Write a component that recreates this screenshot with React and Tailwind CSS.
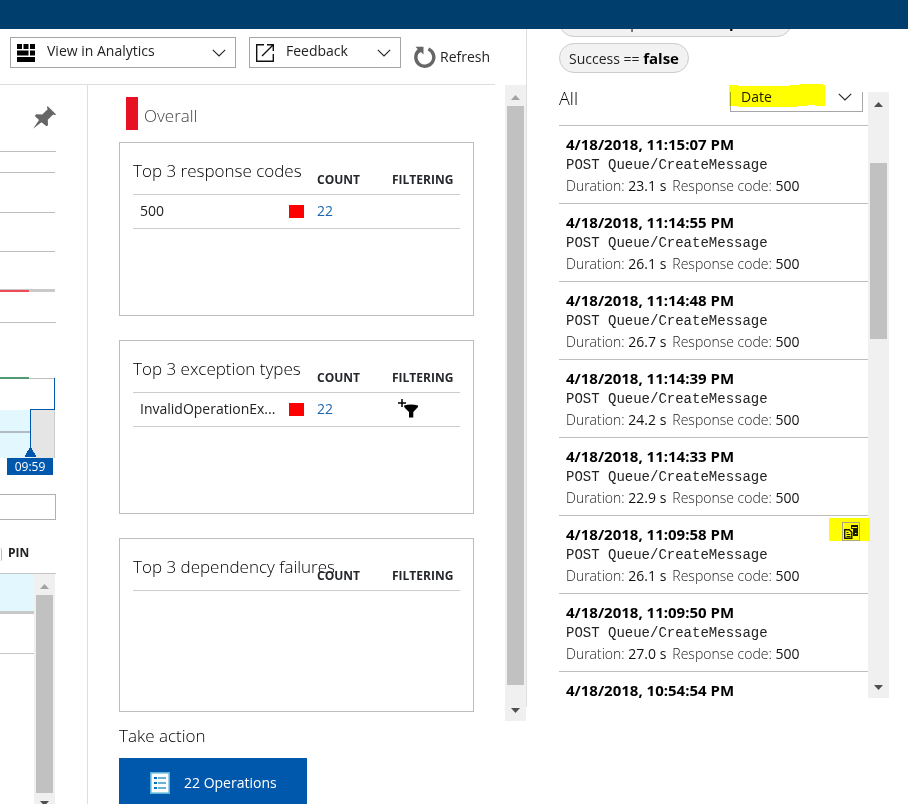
import React from "react";

const chartTicks = [11, 32, 72, 111];

const cards = [
  { title: "Top 3 response codes", rows: [{ name: "500", count: 22, filter: false }] },
  { title: "Top 3 exception types", rows: [{ name: "InvalidOperationEx...", count: 22, filter: true }] },
  { title: "Top 3 dependency failures", rows: [] },
];

const requests = [
  { time: "4/18/2018, 11:15:07 PM", duration: "23.1 s" },
  { time: "4/18/2018, 11:14:55 PM", duration: "26.1 s" },
  { time: "4/18/2018, 11:14:48 PM", duration: "26.7 s" },
  { time: "4/18/2018, 11:14:39 PM", duration: "24.2 s" },
  { time: "4/18/2018, 11:14:33 PM", duration: "22.9 s" },
  { time: "4/18/2018, 11:09:58 PM", duration: "26.1 s", profiled: true },
  { time: "4/18/2018, 11:09:50 PM", duration: "27.0 s" },
  { time: "4/18/2018, 10:54:54 PM" },
];

function Chevron() {
  return (
    <svg className="pointer-events-none h-2 w-[14px] shrink-0" viewBox="0 0 14 8" fill="none" stroke="#222" strokeWidth="1.1" aria-hidden="true">
      <path d="M.8.8 7 7 13.2.8" />
    </svg>
  );
}

function Arrow({ up, color }) {
  return (
    <svg className="h-[5px] w-[9px] shrink-0" viewBox="0 0 9 5" fill={color} aria-hidden="true">
      <path d={up ? "M0 5 4.5 0 9 5Z" : "M0 0 4.5 5 9 0Z"} />
    </svg>
  );
}

function Scrollbar({ className, before, thumb, upColor = "#a3a3a3" }) {
  return (
    <div className={`flex w-[21px] shrink-0 flex-col items-center bg-[#f0f0f0] ${className}`} aria-hidden="true">
      <div className="flex h-[21px] shrink-0 items-center justify-center pt-[3px]">
        <Arrow up color={upColor} />
      </div>
      <div className={`shrink-0 ${before}`} />
      <div className={`w-[17px] bg-[#c1c1c1] ${thumb}`} />
      <div className="mt-auto flex h-[21px] shrink-0 items-center justify-center">
        <Arrow color="#505050" />
      </div>
    </div>
  );
}

function AnalyticsIcon() {
  return (
    <svg className="h-[18px] w-[18px] shrink-0" viewBox="0 0 18 18" fill="#000" aria-hidden="true">
      <path d="M0 0h5v5H0zM6.5 0h5v5h-5zM13 0h5v5h-5zM0 6.5h11.5v5H0zM13 6.5h5v5h-5zM0 13h18v5H0z" />
    </svg>
  );
}

function FeedbackIcon() {
  return (
    <svg className="h-[18px] w-[18px] shrink-0" viewBox="0 0 18 18" fill="none" stroke="#111" strokeWidth="1.4" aria-hidden="true">
      <path d="M8 .7H.7v16.6h16.6V10M6 12 17 1M11 .7h6.3V7" />
    </svg>
  );
}

function ToolbarSelect({ label, icon, className }) {
  return (
    <div className={`flex h-[31px] min-w-0 items-center border border-[#a6a6a6] pr-[9px] pl-[6px] ${className}`}>
      {icon}
      <select aria-label={label} className="h-[25px] min-w-0 flex-1 appearance-none self-start bg-transparent pl-3 text-sm text-[#222] outline-none">
        <option>{label}</option>
      </select>
      <Chevron />
    </div>
  );
}

function Toolbar() {
  return (
    <div className="mr-[31px] flex h-14 shrink-0 items-start gap-[13px] border-b border-[#dedede] pt-2 pl-[10px]">
      <ToolbarSelect label="View in Analytics" icon={<AnalyticsIcon />} className="w-[226px]" />
      <ToolbarSelect label="Feedback" icon={<FeedbackIcon />} className="w-[152px]" />
      <button type="button" className="mt-[9px] flex items-center gap-1 text-sm text-[#222]">
        <svg className="h-[22px] w-[22px]" viewBox="0 0 22 22" aria-hidden="true">
          <path d="M14.4 3A9 9 0 1 1 5.2 4.2" fill="none" stroke="#666" strokeWidth="3.4" />
          <path d="M1.5.8h8v7.7L7 6 4 8 3 6.500 4.500 4z" fill="#666" />
        </svg>
        Refresh
      </button>
    </div>
  );
}

function TimelinePane() {
  return (
    <div className="flex w-[88px] shrink-0 flex-col border-r border-[#dedede]">
      <button type="button" aria-label="Pin to dashboard" className="mt-5 ml-[32px] h-[26px] w-[25px]">
        <svg className="h-[26px] w-[25px]" viewBox="0 0 25 26" fill="#666" aria-hidden="true">
          <path d="M15.500 1 24.200 9.400 22.500 9.900 21.200 9.600 15.800 14.700 16 20.200 14.500 21.200 9.500 17.300 1 23.800 7 15 2.800 11 4.200 9.200 10.200 9.500 15.700 4.200 15 2.800Z" />
        </svg>
      </button>
      <svg className="mt-[9px] h-[185px] w-[56px]" viewBox="0 0 56 185" shapeRendering="crispEdges" aria-hidden="true">
        {chartTicks.map((y) => (
          <path key={y} d={`M0 ${y}.5H${y === 11 ? 56 : 55}`} stroke="#bdbdbd" />
        ))}
        <rect y="149" width="55" height="3" fill="#cacaca" />
        <rect y="150" width="29" height="2" fill="#ef4a55" />
        <path d="M0 182.500H56" stroke="#bdbdbd" />
      </svg>
      <svg className="mt-[51px] h-[82px] w-[56px]" viewBox="0 0 56 82" shapeRendering="crispEdges" aria-hidden="true">
        <rect y="34" width="30" height="49" fill="#e3f8fe" />
        <rect x="31" y="34" width="23" height="49" fill="#e5e5e5" />
        <rect y="55" width="30" height="2" fill="#afbbbf" />
        <rect y="1" width="29" height="2" fill="#4f9a73" />
        <path d="M29 2.500H54" stroke="#bdbdbd" />
        <path d="M54.500 34V82" stroke="#ccc" />
        <path d="M54.500 2V33.500H30.500V73" fill="none" stroke="#0058ad" />
        <path d="M30.500 70 36.500 81H24.500Z" fill="#0058ad" />
      </svg>
      <div className="ml-[7px] h-[17px] w-[46px] bg-[#0058ad] text-center text-xs leading-[17px] text-white">09:59</div>
      <input type="search" aria-label="Search operations" className="mt-[19px] h-[26px] w-[56px] shrink-0 border border-l-0 border-[#b0b0b0] outline-none" />
      <div className="mt-6 flex h-[30px] w-[56px] shrink-0 items-start gap-[6px] border-b border-[#c4c4c4]">
        <span className="mt-1 h-[13px] w-[2px] shrink-0 rounded-r-full border-r border-[#bbb]" />
        <span className="text-xs leading-[18px] font-bold text-[#222]">PIN</span>
      </div>
      <div className="flex min-h-0 w-[55px] flex-1">
        <div className="min-w-0 flex-1">
          <div className="h-10 border-b-3 border-[#c8c8c8] bg-[#e3f8fe]" />
          <div className="h-10 border-b border-[#c8c8c8]" />
        </div>
        <Scrollbar className="h-[240px]" before="h-0" thumb="h-[199px]" />
      </div>
    </div>
  );
}

function FilterIcon() {
  return (
    <svg className="h-5 w-5" viewBox="0 0 20 20" aria-hidden="true">
      <path d="M4 0V8M0 4H8" stroke="#000" strokeWidth="1.5" />
      <path d="M6 6.500Q13 4.500 20 6.500V8L15.300 13V18.500H11V13L6.500 8.500Z" fill="#000" />
    </svg>
  );
}

function BreakdownCard({ title, rows }) {
  return (
    <section className="h-[174px] shrink-0 border border-[#bdbdbd] px-[13px]">
      <table className="w-full table-fixed border-collapse text-left text-sm">
        <colgroup>
          <col />
          <col className="w-7" />
          <col className="w-[75px]" />
          <col className="w-[68px]" />
        </colgroup>
        <thead>
          <tr className="h-[51px] border-b border-[#ccc] align-bottom">
            <th colSpan={2} className="pb-[11px] text-[17px] leading-6 font-light whitespace-nowrap text-black">{title}</th>
            <th className="pb-[5px] text-xs leading-[18px] font-bold text-[#24272c]">COUNT</th>
            <th className="pb-[5px] text-xs leading-[18px] font-bold text-[#24272c]">FILTERING</th>
          </tr>
        </thead>
        <tbody>
          {rows.map((row) => (
            <tr key={row.name} className="h-[34px] border-b border-[#ccc]">
              <td className="pl-[7px] whitespace-nowrap text-[#222]">{row.name}</td>
              <td>
                <div className="h-[13px] w-[15px] bg-[#f00]" />
              </td>
              <td>
                <a href="#count" className="text-[#1c66b0]">{row.count}</a>
              </td>
              <td>
                {row.filter && (
                  <button type="button" aria-label="Add filter" className="ml-[6px] block">
                    <FilterIcon />
                  </button>
                )}
              </td>
            </tr>
          ))}
        </tbody>
      </table>
    </section>
  );
}

function OverallPane() {
  return (
    <div className="flex min-w-0 flex-1 flex-col pr-[31px] pl-[31px]">
      <h2 className="mt-3 ml-[7px] flex h-[33px] shrink-0 items-center border-l-12 border-[#e81123] pl-[6px] pt-1 text-[17px] font-light text-[#444]">Overall</h2>
      <div className="mt-3 flex flex-col gap-6">
        {cards.map((card) => (
          <BreakdownCard key={card.title} {...card} />
        ))}
      </div>
      <h3 className="mt-3 text-[17px] leading-6 font-light text-black">Take action</h3>
      <button type="button" className="mt-[10px] flex h-[50px] w-[188px] shrink-0 items-center gap-[14px] bg-[#0058ad] pl-[31px] text-sm text-white">
        <svg className="h-[22px] w-5" viewBox="0 0 20 22" aria-hidden="true">
          <rect x=".8" y=".8" width="18.400" height="20.400" fill="#fff" stroke="#59b4d9" strokeWidth="1.600" />
          <path d="M4 6h3M4 11h3M4 16h3" stroke="#0072c6" strokeWidth="2" />
          <path d="M8 6h8M8 11h8M8 16h8" stroke="#3999c6" strokeWidth="1.400" />
        </svg>
        22 Operations
      </button>
    </div>
  );
}

function ProfilerIcon() {
  return (
    <svg className="h-[19px] w-[18px]" viewBox="0 0 18 19" aria-hidden="true">
      <rect x=".5" y=".5" width="17" height="18" fill="none" stroke="#a9a97c" />
      <path d="M9 3h7v11h-5V7H9z" fill="#1a1a00" />
      <path d="M10 5.500h5M13 11.500h1.500" stroke="#ff0" />
      <path d="M2.700 7.700h4.600l2.500 2.500v6.100H2.700z" fill="#ff0" stroke="#1a1a00" strokeWidth="1.400" />
      <path d="M4.500 10.500h2M4.500 12.500h4M4.500 14.500h4" stroke="#1a1a00" />
    </svg>
  );
}

function RequestItem({ time, duration, profiled }) {
  return (
    <li className="relative h-[78px] shrink-0 border-b border-[#bdbdbd] pt-2 pl-[7px] whitespace-nowrap">
      <div className="text-[15px] leading-5 font-bold text-black">{time}</div>
      {duration && (
        <>
          <div className="font-['Liberation_Mono',monospace] text-sm leading-[22px] text-[#222]">POST Queue/CreateMessage</div>
          <div className="flex gap-[6px] text-sm leading-5 text-[#111]">
            <span>
              <span className="font-light text-[#222]">Duration:</span> {duration}
            </span>
            <span>
              <span className="font-light text-[#222]">Response code:</span> 500
            </span>
          </div>
        </>
      )}
      {profiled && (
        <button type="button" aria-label="Profiler trace" className="absolute top-[2px] -right-[2px] flex h-[23px] w-[41px] items-end bg-[#ff0] pl-[13px]">
          <ProfilerIcon />
        </button>
      )}
    </li>
  );
}

function FilterChip({ field, value, className }) {
  return (
    <span className={`h-[30px] shrink-0 rounded-full border border-[#ccc] bg-[#f2f2f2] px-[9px] text-sm leading-7 whitespace-nowrap text-[#222] ${className}`}>
      {field} == <b className="text-[15px] text-black">{value}</b>
    </span>
  );
}

function RequestsPane() {
  return (
    <aside className="flex w-[381px] shrink-0 flex-col pr-[19px] pl-8">
      <div className="flex h-[63px] shrink-0 flex-col items-start justify-end gap-[6px] overflow-hidden pb-[19px]">
        <FilterChip field="Related operation" value="Dependent" className="w-[233px]" />
        <FilterChip field="Success" value="false" className="" />
      </div>
      <div className="flex h-[606px] min-h-0">
        <div className="relative flex min-w-0 flex-1 flex-col">
          <div className="z-10 -mr-[2px] flex min-h-0 flex-1 flex-col overflow-hidden pr-[2px]">
            <div className="flex h-[34px] shrink-0 items-start justify-between border-b border-[#bdbdbd] pr-[5px]">
              <h3 className="-mt-[6px] text-lg leading-6 font-light text-black">All</h3>
              <div className="-mt-[11px] flex h-[31px] w-[133px] items-center border border-[#a6a6a6] pr-[10px]">
                <select aria-label="Sort by" className="h-full min-w-0 flex-1 appearance-none bg-transparent pl-[10px] text-sm text-[#222] outline-none">
                  <option>Date</option>
                </select>
                <Chevron />
              </div>
            </div>
            <ul className="flex flex-col">
              {requests.map((request) => (
                <RequestItem key={request.time} {...request} />
              ))}
            </ul>
          </div>
          <svg className="pointer-events-none absolute -top-2 right-[43px] z-20 h-6 w-24 mix-blend-multiply" viewBox="0 0 96 24" fill="#ff0" aria-hidden="true">
            <path d="M0 1H8V2H61V1H71V0H94V1H96V22H86V21H79V22H69V23H9V22H0Z" />
          </svg>
        </div>
        <Scrollbar className="h-full" before="h-[50px]" thumb="h-[176px]" upColor="#505050" />
      </div>
    </aside>
  );
}

export default function App() {
  return (
    <div className="flex h-screen flex-col overflow-hidden bg-white font-['Open_Sans','Noto_Sans',sans-serif]">
      <header className="h-[29px] shrink-0 bg-[#003e6d]" />
      <div className="flex min-h-0 flex-1">
        <main className="flex min-w-0 flex-1 flex-col">
          <Toolbar />
          <div className="flex min-h-0 flex-1">
            <TimelinePane />
            <OverallPane />
            <Scrollbar className="h-[636px]" before="h-0" thumb="h-[579px]" />
          </div>
        </main>
        <div className="h-[678px] w-px shrink-0 bg-[#dedede]" />
        <RequestsPane />
      </div>
    </div>
  );
}
